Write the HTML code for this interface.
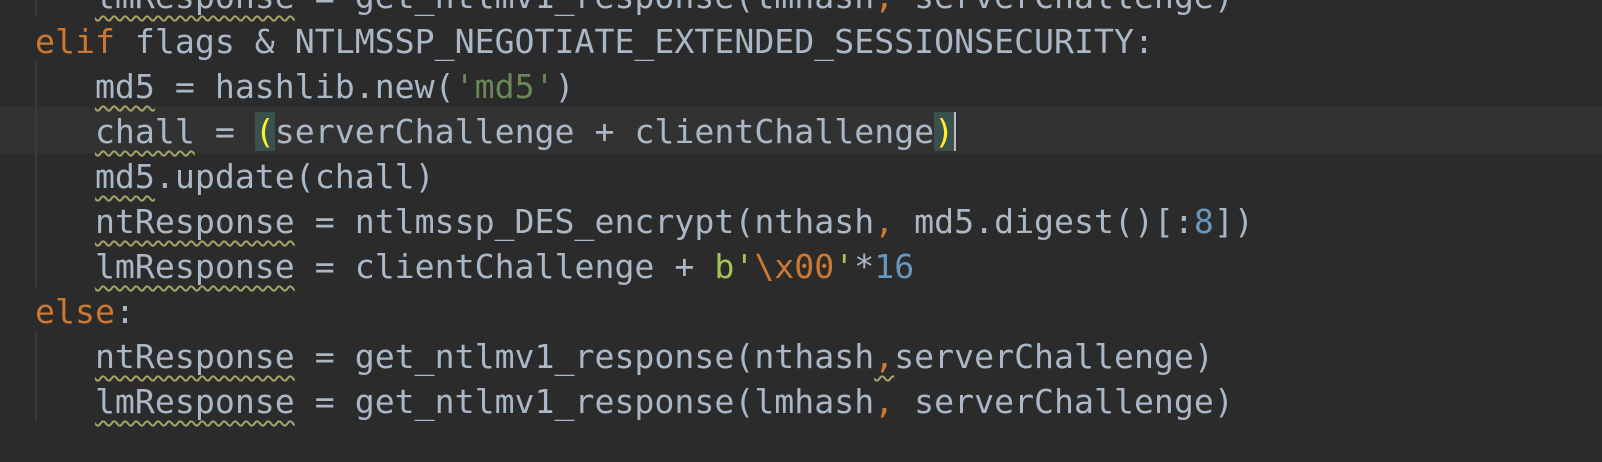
<html><head><style>
body{margin:0;background:#2b2b2b;width:1602px;height:462px;overflow:hidden;position:relative}
.l{position:absolute;left:35px;height:45px;line-height:45px;font-family:"DejaVu Sans Mono","Liberation Mono",monospace;font-size:33.2px;color:#a9b7c6;white-space:pre}
.k{color:#cc7832}.s{color:#6a8759}.n{color:#6897bb}.b{color:#a5c25c}
.w{text-decoration:underline wavy #a3a36a;text-decoration-thickness:1.5px;text-underline-offset:7px}
.g{position:absolute;left:35px;width:2px;background:#393939}
.br{background:#3b514d;color:#ffef28}
</style></head><body>
<div style="position:absolute;left:0;top:107px;width:1602px;height:46px;background:#323232"></div>
<div class="g" style="top:0;height:17px"></div>
<div class="g" style="top:62px;height:225px"></div>
<div class="g" style="top:332px;height:90px"></div>
<div class="l" style="top:-26px">   <span class="w">lmResponse</span> = get_ntlmv1_response(lmhash<span class="k">,</span> serverChallenge)</div>
<div class="l" style="top:19px"><span class="k">elif</span> flags &amp; NTLMSSP_NEGOTIATE_EXTENDED_SESSIONSECURITY:</div>
<div class="l" style="top:64px">   <span class="w">md5</span> = hashlib.new(<span class="s">'md5'</span>)</div>
<div class="l" style="top:109px">   <span class="w">chall</span> = <span class="br">(</span>serverChallenge + clientChallenge<span class="br">)</span><span style="border-left:2px solid #bbb"></span></div>
<div class="l" style="top:154px">   <span class="w">md5</span>.update(chall)</div>
<div class="l" style="top:199px">   <span class="w">ntResponse</span> = ntlmssp_DES_encrypt(nthash<span class="k">,</span> md5.digest()[:<span class="n">8</span>])</div>
<div class="l" style="top:244px">   <span class="w">lmResponse</span> = clientChallenge + <span class="b">b'</span><span class="k">\x00</span><span class="b">'</span>*<span class="n">16</span></div>
<div class="l" style="top:289px"><span class="k">else</span>:</div>
<div class="l" style="top:334px">   <span class="w">ntResponse</span> = get_ntlmv1_response(nthash<span class="k w">,</span>serverChallenge)</div>
<div class="l" style="top:379px">   <span class="w">lmResponse</span> = get_ntlmv1_response(lmhash<span class="k">,</span> serverChallenge)</div>
</body></html>
